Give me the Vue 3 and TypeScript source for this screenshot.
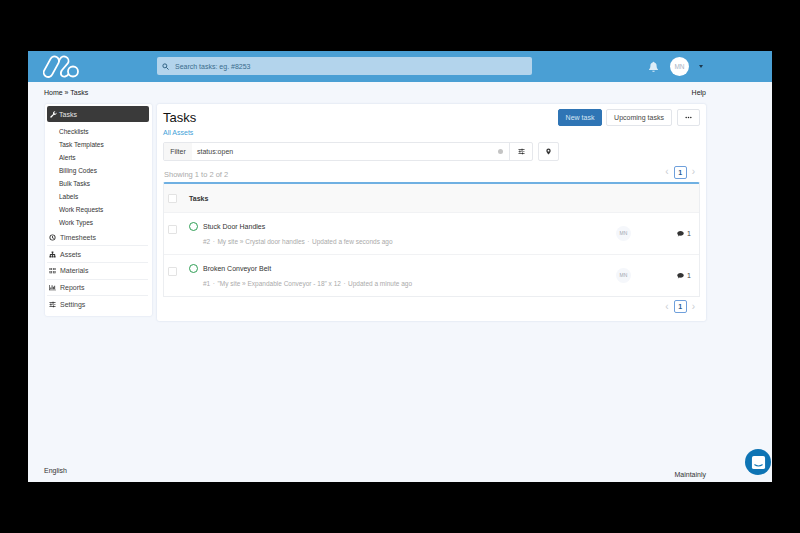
<script setup lang="ts">
const subItems: string[] = ['Checklists', 'Task Templates', 'Alerts', 'Billing Codes', 'Bulk Tasks', 'Labels', 'Work Requests', 'Work Types']
const navItems: { label: string; d: string }[] = [
  { label: 'Timesheets', d: 'M8 1a7 7 0 1 0 0 14A7 7 0 0 0 8 1zm0 2a5 5 0 1 1 0 10A5 5 0 0 1 8 3zM7 4.500h2V8l2.500 1.500-1 1.500L7 9z' },
  { label: 'Assets', d: 'M6 1h4v4H9v2h5v4h1v4h-4v-4h1V9H9v2h1v4H6v-4h1V9H4v2h1v4H1v-4h1V7h5V5H6z' },
  { label: 'Materials', d: 'M1 2h6v5H1zm8 0h6v5H9zM1 9h6v5H1zm8 0h6v5H9zM2 3.500v2h4v-2zm8 0v2h4v-2zM2 10.500v2h4v-2zm8 0v2h4v-2z' },
  { label: 'Reports', d: 'M0 2h1.500v11H16v1.500H0zM3 8h2v4H3zm3-5h2v9H6zm3 3h2v6H9zm3-2h2v8h-2z' },
  { label: 'Settings', d: 'M1 3h7V1.500h2.500V3H15v1.500h-4.500V6H8V4.500H1zm0 4.300h2V5.800h2.500v1.500H15v1.500H5.500v1.500H3V8.800H1zm0 4.200h8V10h2.500v1.500H15V13h-3.500v1.500H9V13H1z' },
]
const rows = [
  { title: 'Stuck Door Handles', meta: ['#2', 'My site » Crystal door handles', 'Updated a few seconds ago'] },
  { title: 'Broken Conveyor Belt', meta: ['#1', '"My site » Expandable Conveyor - 18" x 12', 'Updated a minute ago'] },
]
const slidersPath = navItems[4].d
</script>

<template>
  <div class="screen">
    <header class="topbar">
      <svg class="logo" viewBox="0 0 37 24" fill="none" stroke="#fff" stroke-width="1.800" stroke-linecap="round" stroke-linejoin="round">
        <path d="M1.250 15.340 7.550 3.840A4.500 4.500 0 0 1 15.450 8.160L9.150 19.660A4.500 4.500 0 0 1 1.250 15.340Z" />
        <path d="M15.900 6 17.050 3.840A4.500 4.500 0 0 1 24.950 8.160L18.700 15.500C16.500 19.500 19 22 22 21.500 23.500 21.200 24.700 20.300 25.400 19.300" />
        <circle cx="30" cy="16.500" r="5" />
      </svg>
      <div class="search">
        <svg class="search-icon" viewBox="0 0 16 16" fill="none" stroke="#2d5f80" stroke-width="2.200"><circle cx="6.500" cy="6.500" r="4.500" /><path d="m10 10 5 5" /></svg>
        <span>Search tasks: eg. #8253</span>
      </div>
      <div class="top-right">
        <svg class="bell" viewBox="0 0 16 16" fill="#dcecf7"><path d="M8 1a1.200 1.200 0 0 1 1.200 1.200C11.500 2.800 12.500 4.500 12.500 7c0 3 .8 4 2 5.500v.7h-13v-.7c1.200-1.500 2-2.500 2-5.500 0-2.500 1-4.200 3.300-4.800A1.200 1.200 0 0 1 8 1zM6.200 14h3.600a1.800 1.800 0 0 1-3.600 0z" /></svg>
        <div class="avatar">MN</div>
        <span class="caret"></span>
      </div>
    </header>

    <div class="crumbs">
      <span>Home » Tasks</span>
      <span>Help</span>
    </div>

    <div class="columns">
      <aside class="sidebar">
        <div class="active-item">
          <svg class="nav-icon" viewBox="0 0 16 16" fill="#fff"><path d="M15 4.500a4.500 4.500 0 0 1-6 4.200L3.500 15a1.800 1.800 0 0 1-2.500-2.500l6.300-5.500A4.500 4.500 0 0 1 12.500.700L9.800 3.300l.6 2.300 2.300.6L15 3.500z" /></svg>
          <span>Tasks</span>
        </div>
        <ul class="sub-list">
          <li v-for="s in subItems" :key="s">{{ s }}</li>
        </ul>
        <div v-for="n in navItems" :key="n.label" class="nav-item">
          <svg class="nav-icon" viewBox="0 0 16 16" fill="#333" fill-rule="evenodd"><path :d="n.d" /></svg>
          <span>{{ n.label }}</span>
        </div>
      </aside>

      <main class="card">
        <div class="title-row">
          <div>
            <h1>Tasks</h1>
            <a class="assets">All Assets</a>
          </div>
          <div class="actions">
            <button class="btn primary">New task</button>
            <button class="btn upcoming">Upcoming tasks</button>
            <button class="btn more">
              <svg class="dots" viewBox="0 0 12 4" fill="#222"><circle cx="2" cy="2" r="1.300" /><circle cx="6" cy="2" r="1.300" /><circle cx="10" cy="2" r="1.300" /></svg>
            </button>
          </div>
        </div>

        <div class="filter-row">
          <div class="filter">
            <span class="addon">Filter</span>
            <span class="query">status:open</span>
            <span class="clear"></span>
            <span class="tune">
              <svg class="small-icon" viewBox="0 0 16 16" fill="#333"><path :d="slidersPath" /></svg>
            </span>
          </div>
          <span class="pin">
            <svg class="small-icon" viewBox="0 0 16 16" fill="#333" fill-rule="evenodd"><path d="M8 1a5 5 0 0 1 5 5c0 3-3 6-5 9-2-3-5-6-5-9a5 5 0 0 1 5-5zm0 3a2 2 0 1 0 0 4 2 2 0 0 0 0-4z" /></svg>
          </span>
        </div>

        <div class="showing-row">
          <span class="showing">Showing 1 to 2 of 2</span>
          <div class="pager"><span class="chev">‹</span><span class="page">1</span><span class="chev">›</span></div>
        </div>

        <div class="table">
          <div class="thead">
            <span class="check"></span>
            <span class="th">Tasks</span>
          </div>
          <div v-for="r in rows" :key="r.title" class="row">
            <span class="check lifted"></span>
            <span class="status"></span>
            <div class="row-text">
              <div class="row-title">{{ r.title }}</div>
              <div class="row-meta">
                <span v-for="m in r.meta" :key="m">{{ m }}</span>
              </div>
            </div>
            <span class="mini-avatar">MN</span>
            <span class="comments">
              <svg class="comment-icon" viewBox="0 0 16 16" fill="#333"><path d="M8 2c4 0 7.500 2.300 7.500 5.500S12 13 8 13c-.7 0-1.400 0-2-.2C5 14 3.500 14.600 1.500 14.800c1-1 1.600-2 1.700-3C1.500 10.700.5 9.200.5 7.500.5 4.300 4 2 8 2z" /></svg>
              1
            </span>
          </div>
        </div>

        <div class="pager bottom"><span class="chev">‹</span><span class="page">1</span><span class="chev">›</span></div>
      </main>
    </div>

    <footer class="foot">
      <span class="lang">English</span>
      <span class="brand">Maintainly</span>
    </footer>

    <div class="chat">
      <svg viewBox="0 0 16 16" width="15" height="15"><path fill="#fff" d="M3 1h10a2 2 0 0 1 2 2v10a2 2 0 0 1-2 2H3a2 2 0 0 1-2-2V3a2 2 0 0 1 2-2z" /><path d="M4 10.500c2.500 1.500 5.500 1.500 8 0" stroke="#0e74b4" stroke-width="1.200" fill="none" stroke-linecap="round" /></svg>
    </div>
  </div>
</template>

<style>
html, body { background: #000; margin: 0; }
</style>

<style scoped>
.screen {
  position: relative;
  box-sizing: border-box;
  width: 744px;
  height: 431px;
  margin: 51px 28px;
  background: #f4f7fc;
  display: flex;
  flex-direction: column;
  overflow: hidden;
  font-family: "Liberation Sans", Arial, sans-serif;
  font-size: 7px;
  color: #333;
}
.topbar {
  height: 31px;
  flex: none;
  background: #4a9fd4;
  display: flex;
  align-items: center;
  padding-left: 15px;
}
.logo { width: 37px; height: 24px; flex: none; margin-right: 77px; }
.search {
  width: 375px;
  height: 18px;
  margin-top: -1px;
  background: #b3d4ec;
  border-radius: 2px;
  display: flex;
  align-items: center;
  gap: 6px;
  padding-left: 5px;
  box-sizing: border-box;
  color: #3a6c8d;
}
.search-icon { width: 7px; height: 7px; }
.top-right { display: flex; align-items: center; margin-left: 116px; }
.bell { width: 11px; height: 11px; margin-right: 11px; }
.avatar {
  width: 19px;
  height: 19px;
  border-radius: 50%;
  background: #fff;
  color: #a9b4c4;
  font-size: 6.500px;
  display: flex;
  align-items: center;
  justify-content: center;
}
.caret {
  width: 0;
  height: 0;
  margin-left: 10px;
  border-left: 2.500px solid transparent;
  border-right: 2.500px solid transparent;
  border-top: 3px solid #1d3a50;
}
.crumbs {
  display: flex;
  justify-content: space-between;
  padding: 6px 66px 0 16px;
  height: 16px;
  line-height: 10px;
  flex: none;
  color: #222;
}
.columns {
  display: flex;
  align-items: flex-start;
  gap: 5px;
  padding: 0 66px 0 17px;
  flex: 1;
}
.sidebar {
  width: 107px;
  height: 212px;
  box-sizing: border-box;
  padding: 2px 3px 2px 2px;
  background: #fff;
  border-radius: 2px;
  box-shadow: 0 0 2px rgba(150, 170, 200, .35);
}
.active-item {
  height: 16px;
  background: #3a3a3a;
  border-radius: 2px;
  color: #e8e8e8;
  display: flex;
  align-items: center;
  gap: 2px;
  padding-left: 3px;
}
.nav-icon { width: 7px; height: 7px; flex: none; }
.sub-list {
  list-style: none;
  margin: 0;
  padding: 2.500px 0 1px 12px;
}
.sub-list li { height: 13px; line-height: 13px; font-size: 6.500px; color: #333; }
.nav-item {
  height: 16.700px;
  margin: 0 1px 0 0;
  display: flex;
  align-items: center;
  gap: 4px;
  padding-left: 2px;
  border-bottom: 1px solid #eef0f3;
  box-sizing: border-box;
  color: #444;
}
.nav-item:last-child { border-bottom: none; }
.card {
  width: 549px;
  height: 217px;
  box-sizing: border-box;
  padding: 5px 6px 0;
  background: #fff;
  border-radius: 2px;
  box-shadow: 0 0 2px rgba(150, 170, 200, .4);
}
.title-row { display: flex; justify-content: space-between; align-items: flex-start; height: 33px; }
h1 { margin: 0; font-size: 13px; font-weight: 400; line-height: 18px; color: #111; }
.assets { display: block; color: #3f9fd8; line-height: 10px; margin-top: 1px; }
.actions { display: flex; gap: 4px; }
.btn {
  height: 17px;
  box-sizing: border-box;
  border: 1px solid #e2e5ea;
  background: #fff;
  border-radius: 2px;
  font: 7px "Liberation Sans", Arial, sans-serif;
  color: #444;
  padding: 0;
  cursor: pointer;
}
.primary { width: 44px; background: #2f75b5; border-color: #2f75b5; color: #d7e6f3; }
.upcoming { width: 66px; }
.more { width: 23px; margin-left: 1px; display: flex; align-items: center; justify-content: center; }
.dots { width: 7px; height: 3px; }
.filter-row { display: flex; gap: 5px; height: 19px; }
.filter {
  width: 370px;
  box-sizing: border-box;
  border: 1px solid #e6e8ec;
  border-radius: 2px;
  display: flex;
  align-items: center;
  height: 19px;
}
.addon {
  width: 28px;
  height: 100%;
  background: #f7f7f7;
  display: flex;
  align-items: center;
  justify-content: center;
  color: #444;
}
.query { flex: 1; padding-left: 5px; color: #444; }
.clear { width: 5px; height: 5px; border-radius: 50%; background: #c4c4c4; margin-right: 6px; }
.tune {
  width: 22px;
  height: 100%;
  border-left: 1px solid #e6e8ec;
  display: flex;
  align-items: center;
  justify-content: center;
}
.small-icon { width: 7px; height: 7px; }
.pin {
  width: 21px;
  height: 19px;
  box-sizing: border-box;
  border: 1px solid #e6e8ec;
  border-radius: 2px;
  display: flex;
  align-items: center;
  justify-content: center;
}
.showing-row {
  display: flex;
  justify-content: space-between;
  align-items: center;
  height: 21px;
  padding: 0 0 0 1px;
}
.showing { color: #aaa; font-size: 7.500px; margin-top: 5px; }
.pager { display: flex; align-items: center; gap: 5px; color: #c9ccd2; font-size: 10px; }
.chev { line-height: 10px; }
.page {
  width: 13px;
  height: 13px;
  box-sizing: border-box;
  border: 1px solid #6fa0dc;
  border-radius: 2px;
  color: #2c5d92;
  font-size: 7px;
  font-weight: 700;
  display: flex;
  align-items: center;
  justify-content: center;
}
.showing-row .pager { padding-right: 5px; margin-top: 1px; }
.table {
  border: 1px solid #eceef1;
  border-top: 2px solid #6fb0e2;
  border-radius: 2px 2px 0 0;
}
.thead {
  height: 28px;
  background: #f9f9f9;
  display: flex;
  align-items: center;
  padding-left: 4px;
}
.th { font-weight: 700; margin-left: 12px; color: #333; }
.check {
  width: 9px;
  height: 9px;
  box-sizing: border-box;
  border: 1px solid #e3e3e3;
  border-radius: 1px;
  background: #fff;
  flex: none;
}
.lifted { margin-top: -8px; }
.row {
  height: 42px;
  box-sizing: border-box;
  display: flex;
  align-items: center;
  padding-left: 4px;
  position: relative;
  border-top: 1px solid #f1f2f4;
}
.status {
  width: 9px;
  height: 9px;
  box-sizing: border-box;
  border: 1.500px solid #2f9e55;
  border-radius: 50%;
  margin: -15px 0 0 12px;
  flex: none;
}
.row-text { margin-left: 5px; flex: 1; padding-top: 1px; }
.row-title { color: #333; line-height: 10px; }
.row-meta { color: #aaa; font-size: 6.500px; margin-top: 5px; line-height: 10px; }
.row-meta span + span::before { content: "·"; margin: 0 2.500px; }
.mini-avatar {
  width: 15px;
  height: 15px;
  border-radius: 50%;
  background: #f5f7fb;
  color: #a0a6ae;
  font-size: 5px;
  display: flex;
  align-items: center;
  justify-content: center;
  margin-right: 46px;
  margin-top: -1px;
  flex: none;
}
.comments { width: 19px; margin-right: 3px; display: flex; align-items: center; gap: 3px; color: #444; margin-top: -1px; }
.comment-icon { width: 7px; height: 7px; }
.bottom { justify-content: flex-end; margin-top: 3px; padding-right: 5px; }
.foot {
  display: flex;
  justify-content: space-between;
  align-items: flex-end;
  padding: 0 66px 4px 16px;
  color: #333;
  flex: none;
}
.lang { margin-bottom: 4px; }
.chat {
  position: absolute;
  right: 1px;
  bottom: 7px;
  width: 26px;
  height: 26px;
  border-radius: 50%;
  background: #0e74b4;
  display: flex;
  align-items: center;
  justify-content: center;
}
</style>
